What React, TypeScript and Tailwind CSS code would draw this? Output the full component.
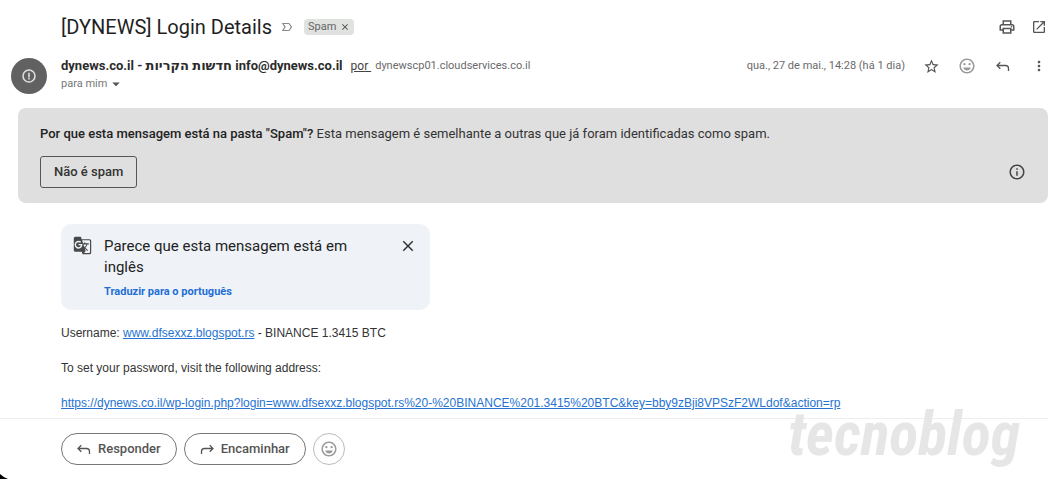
import React from "react";
import {
  MdClose,
  MdGTranslate,
  MdInfoOutline,
  MdLabelImportantOutline,
  MdMoreVert,
  MdOpenInNew,
  MdArrowDropDown,
  MdOutlineEmojiEmotions,
  MdOutlinePrint,
  MdStarBorder,
} from "react-icons/md";

function ReplyIcon({ className = "" }: { className?: string }) {
  return (
    <svg viewBox="0 0 16 16" fill="none" stroke="currentColor" strokeWidth="1.3" className={`size-4 ${className}`} aria-hidden="true">
      <path d="M5.3 4.2 2 7.5 5.3 10.8M2.2 7.5h8.3a3 3 0 0 1 3 3V13" />
    </svg>
  );
}

function IconButton({ label, className = "", children }: { label: string; className?: string; children: React.ReactNode }) {
  return (
    <button type="button" aria-label={label} className={`flex size-4 shrink-0 items-center justify-center ${className}`}>
      {children}
    </button>
  );
}

function SubjectBar() {
  return (
    <header className="flex h-8 items-center pl-[61px]">
      <h1 className="text-xl leading-8 text-[#1f1f1f]">[DYNEWS] Login Details</h1>
      <MdLabelImportantOutline className="ml-2 size-3.5 text-[#8a8a8a]" />
      <div className="ml-2.5 flex h-4 items-center gap-1 rounded-sm bg-[#e0e2df] px-1 text-[11px] text-[#666]">
        <span>Spam</span>
        <button type="button" aria-label="Remover marcador Spam" className="text-[#444]">
          <MdClose className="size-2.5" />
        </button>
      </div>
      <div className="ml-auto flex gap-4 pr-px text-[#555]">
        <IconButton label="Imprimir">
          <MdOutlinePrint className="size-[18px] shrink-0" />
        </IconButton>
        <IconButton label="Abrir em nova janela">
          <MdOpenInNew className="size-4" />
        </IconButton>
      </div>
    </header>
  );
}

function SenderRow() {
  return (
    <section className="mt-[13px] flex h-11 items-start pl-[11px]">
      <div className="mt-0.5 flex size-9 shrink-0 items-center justify-center rounded-full bg-[#616161] text-[#dcdcdc]">
        <svg viewBox="0 0 16 16" className="size-4" fill="none" stroke="currentColor" aria-hidden="true">
          <circle cx="8" cy="8" r="6" strokeWidth="1.6" />
          <path d="M8 4.8v4.4M8 9.8v1.6" strokeWidth="1.6" />
        </svg>
      </div>
      <div className="ml-3.5 flex min-w-0 grow flex-col">
        <div className="flex h-5 items-center whitespace-nowrap text-[11px] text-[#6a6a6a]">
          <span dir="ltr" className="text-[13px] font-bold text-[#2b2b2b]">
            dynews.co.il - חדשות הקריות info@dynews.co.il
          </span>
          <a href="#por" className="ml-2 whitespace-pre text-xs text-[#444] underline">{"por "}</a>
          <span className="ml-1">dynewscp01.cloudservices.co.il</span>
          <time className="ml-auto">qua., 27 de mai., 14:28 (há 1 dia)</time>
          <div className="ml-[18px] flex gap-5 pr-px text-[#555]">
            <IconButton label="Com estrela"><MdStarBorder className="size-[17px] shrink-0" /></IconButton>
            <IconButton label="Adicionar reação" className="text-[#999]"><MdOutlineEmojiEmotions className="size-[18px] shrink-0" /></IconButton>
            <IconButton label="Responder"><ReplyIcon /></IconButton>
            <IconButton label="Mais"><MdMoreVert className="size-4 shrink-0" /></IconButton>
          </div>
        </div>
        <button type="button" className="flex h-4 items-center self-start text-[11px] text-[#777]">
          para mim
          <MdArrowDropDown className="size-[18px] text-[#555]" />
        </button>
      </div>
    </section>
  );
}

function SpamNotice() {
  return (
    <section className="ml-[18px] mt-2 rounded-lg bg-[#dfdfdf] px-[22px] pb-[15px] pt-4 text-[13px] text-[#333]">
      <p className="leading-5">
        <strong className="font-medium text-[#222]">Por que esta mensagem está na pasta "Spam"?</strong>{" "}
        Esta mensagem é semelhante a outras que já foram identificadas como spam.
      </p>
      <div className="mt-3 flex items-center justify-between">
        <button type="button" className="h-8 rounded-[3px] border border-[#555] px-[13px] font-medium">Não é spam</button>
        <button type="button" aria-label="Mais informações" className="text-[#444]"><MdInfoOutline className="size-[18px]" /></button>
      </div>
    </section>
  );
}

function TranslateCard() {
  return (
    <aside className="flex w-[369px] max-w-full items-start rounded-[10px] bg-[#eff3f8] px-3 pb-2 pt-3">
      <MdGTranslate className="size-[19px] shrink-0 text-[#484848]" />
      <div className="ml-3 grow">
        <p className="w-64 text-[15px] leading-[21px] text-[#222]">Parece que esta mensagem está em inglês</p>
        <a href="#traduzir" className="mt-1 block text-[11px] leading-5 font-bold text-[#1f6fd6]">Traduzir para o português</a>
      </div>
      <button type="button" aria-label="Fechar" className="mr-px mt-px text-[#333]"><MdClose className="size-[18px]" /></button>
    </aside>
  );
}

function MessageBody() {
  const link = "text-[#2673d1] underline";
  return (
    <article className="mt-3.5 flex flex-col gap-[17px] font-['Liberation_Sans',Arial,sans-serif] text-xs leading-[18px] text-[#333]">
      <p>
        Username: <a href="#blog" className={link}>www.dfsexxz.blogspot.rs</a> - BINANCE 1.3415 BTC
      </p>
      <p>To set your password, visit the following address:</p>
      <p>
        <a href="#login" className={link}>
          https://dynews.co.il/wp-login.php?login=www.dfsexxz.blogspot.rs%20-%20BINANCE%201.3415%20BTC&amp;key=bby9zBji8VPSzF2WLdof&amp;action=rp
        </a>
      </p>
    </article>
  );
}

function ReplyBar() {
  const pill = "flex h-8 items-center gap-1.5 rounded-full border border-[#777] pl-3.5 pr-[15px] text-[13px] font-medium text-[#555]";
  return (
    <footer className="relative mt-1.5 flex gap-[7px] border-t border-[#ededed] pl-[61px] pt-3.5">
      <button type="button" className={pill}><ReplyIcon />Responder</button>
      <button type="button" className={pill}><ReplyIcon className="-scale-x-100" />Encaminhar</button>
      <button type="button" aria-label="Adicionar reação" className="flex size-8 items-center justify-center rounded-full border border-[#bbb] text-[#999]">
        <MdOutlineEmojiEmotions className="size-[18px]" />
      </button>
      <span className="absolute -top-1.5 right-7 font-['Roboto_Condensed',Roboto,sans-serif] text-6xl leading-[44px] font-bold text-[#e6e6e6] italic">
        tecnoblog
      </span>
    </footer>
  );
}

export default function App() {
  return (
    <main className="relative min-h-screen overflow-hidden bg-white pr-3 pt-[11px] font-[Roboto,'Noto_Sans','DejaVu_Sans',sans-serif]">
      <SubjectBar />
      <SenderRow />
      <SpamNotice />
      <div className="pl-[61px] pt-[21px]">
        <TranslateCard />
        <MessageBody />
      </div>
      <ReplyBar />
      <svg viewBox="0 0 8 5" className="absolute bottom-0 left-0 h-[5px] w-2" aria-hidden="true">
        <path d="M0 0Q3 3 8 5H0Z" fill="#000" />
      </svg>
    </main>
  );
}
